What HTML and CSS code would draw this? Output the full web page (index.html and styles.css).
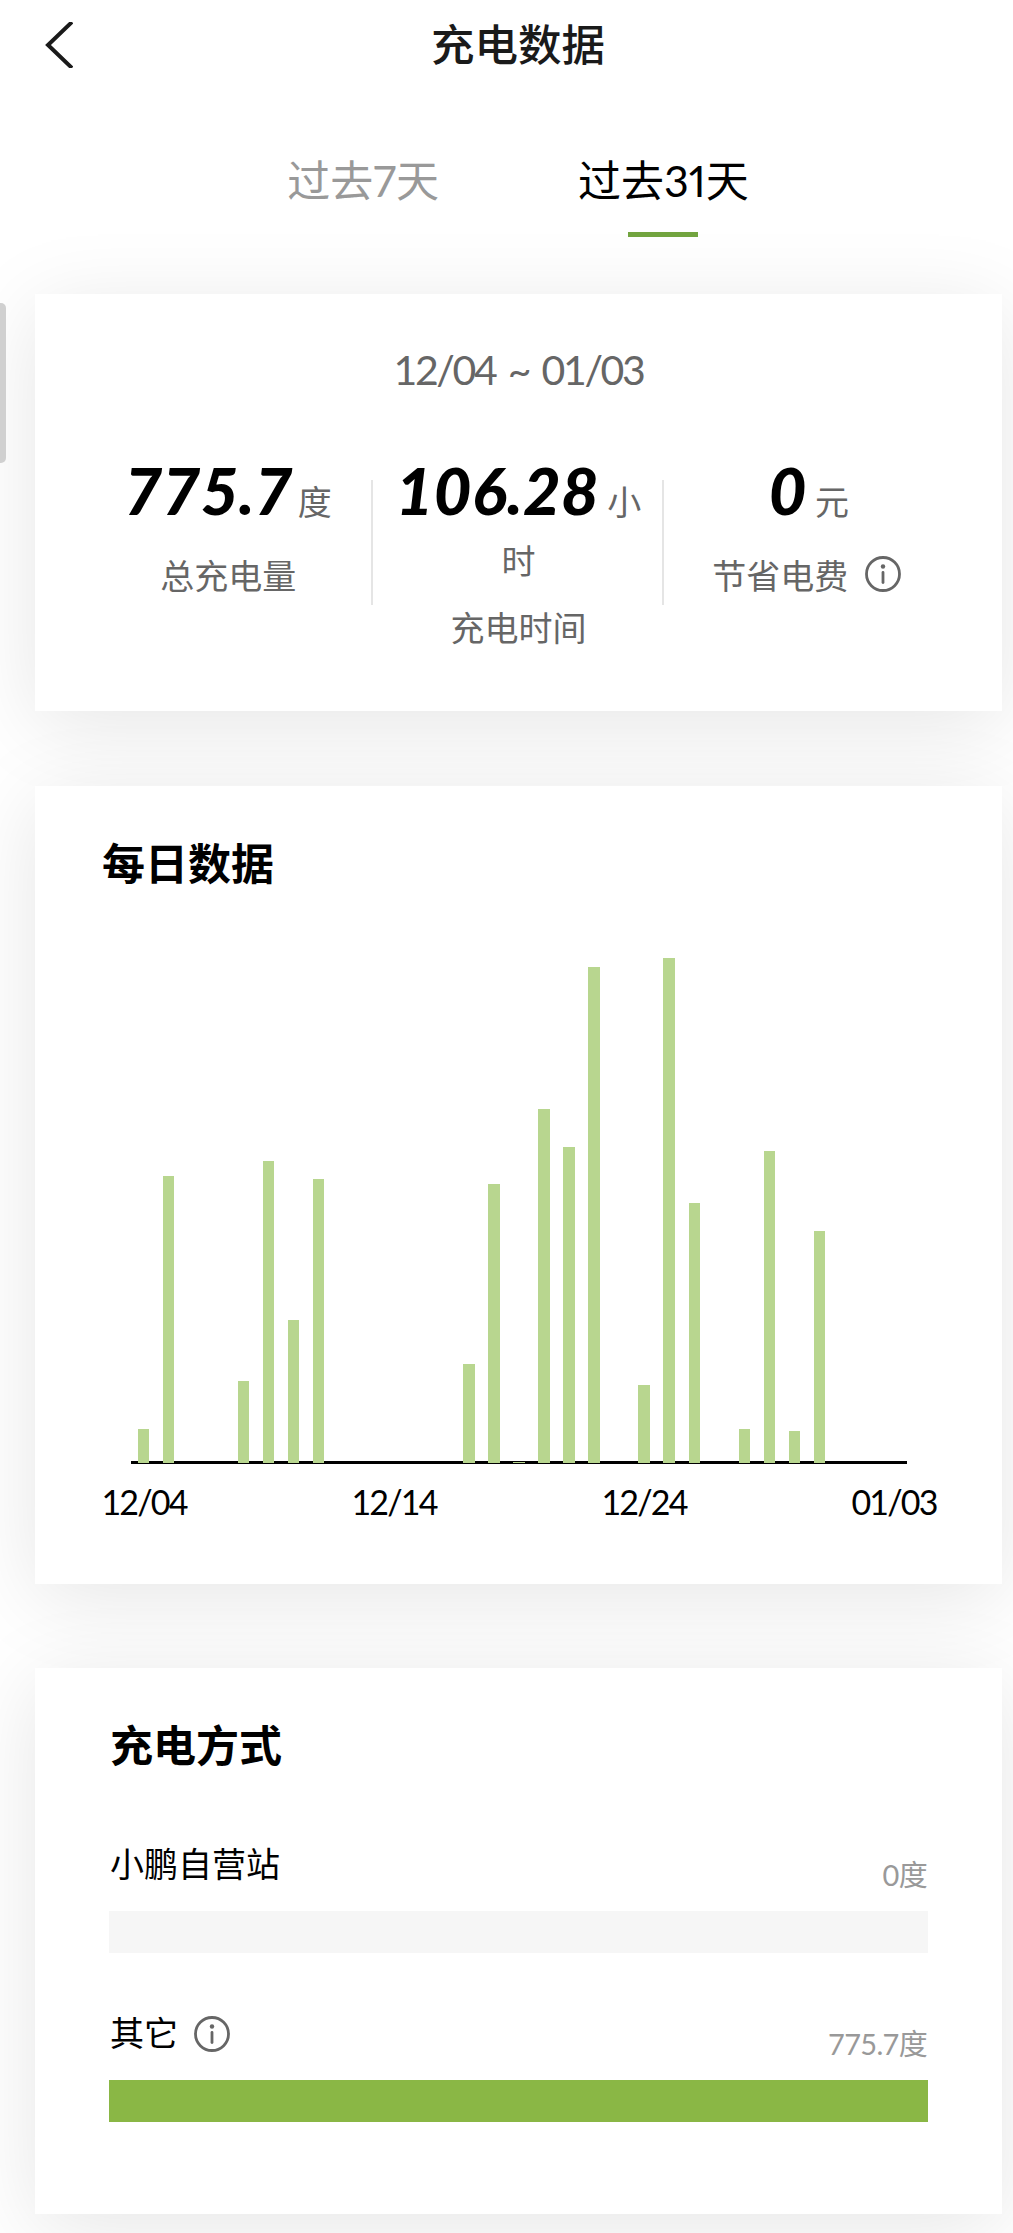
FILE: index.html
```html
<!DOCTYPE html>
<html lang="zh-CN">
<head>
  <meta charset="UTF-8">
  <title>充电数据</title>
  <link rel="stylesheet" href="styles.css">
</head>
<body>
  <div class="scroll-thumb"></div>
  <header class="header">
    <svg class="back" viewBox="0 0 30 46"><path d="M29 0 L5 23 L29 46"/></svg>
    <h1>充电数据</h1>
  </header>

  <nav class="tabs">
    <div class="tab">过去7天</div>
    <div class="tab active">过去31天</div>
  </nav>

  <section class="card summary">
    <div class="range">12/04 ~ 01/03</div>
    <div class="stats">
      <div class="stat">
        <div class="value"><b>775.7</b><span class="unit">度</span></div>
        <div class="label">总充电量</div>
      </div>
      <div class="stat">
        <div class="value"><b>106.28</b><span class="unit wide">小</span><span>时</span></div>
        <div class="label">充电时间</div>
      </div>
      <div class="stat">
        <div class="value"><b>0</b><span class="unit wide">元</span></div>
        <div class="label">节省电费
          <svg class="info" viewBox="0 0 36 36"><circle cx="18" cy="18" r="16.5"/><path d="M18 16.5V26.5"/><circle class="dot" cx="18" cy="10.5" r="2.2"/></svg>
        </div>
      </div>
    </div>
  </section>

  <section class="card daily">
    <h2>每日数据</h2>
    <div class="chart" id="chart"></div>
    <div class="axis">
      <span>12/04</span>
      <span>12/14</span>
      <span>12/24</span>
      <span>01/03</span>
    </div>
  </section>

  <section class="card methods">
    <h2>充电方式</h2>
    <div class="method">
      <div class="method-head">
        <div class="name">小鹏自营站</div>
        <div class="amount">0度</div>
      </div>
      <div class="track"><div class="fill" style="width:0%"></div></div>
    </div>
    <div class="method">
      <div class="method-head">
        <div class="name">其它
          <svg class="info" viewBox="0 0 36 36"><circle cx="18" cy="18" r="16.5"/><path d="M18 16.5V26.5"/><circle class="dot" cx="18" cy="10.5" r="2.2"/></svg>
        </div>
        <div class="amount">775.7度</div>
      </div>
      <div class="track"><div class="fill" style="width:100%"></div></div>
    </div>
  </section>

  <script>
    // 12/04 - 01/03
    const days = [34, 287, 0, 0, 82, 302, 143, 284, 0, 0, 0, 0, 0, 99, 279, 1.5,
      354, 316, 496, 0, 78, 505, 260.5, 0, 34, 312, 32, 232, 0, 0, 0];
    const chart = document.getElementById('chart');
    days.forEach(function(h) {
      const bar = document.createElement('div');
      bar.className = 'bar';
      bar.style.height = h + 'px';
      chart.appendChild(bar);
    });
  </script>
</body>
</html>
```
FILE: styles.css
```css
* { box-sizing: border-box; }
body {
  margin: 0;
  height: 2233px;
  overflow: hidden;
  background: #fff;
  color: #000;
  font-family: Lato, "Noto Sans CJK SC", sans-serif;
}
h1, h2 { margin: 0; }
.scroll-thumb {
  position: absolute;
  left: 0;
  top: 303px;
  width: 6px;
  height: 160px;
  background: #d0d0d0;
  border-radius: 0 5px 5px 0;
}
.header {
  display: grid;
  grid-template-columns: 100px 1fr 100px;
  align-items: center;
  height: 90px;
  padding: 0 0 0 23px;
}
.back { width: 30px; height: 46px; margin-left: 20px; }
.back path { fill: none; stroke: #1a1a1a; stroke-width: 4; }
.header h1 {
  margin-bottom: 2px;
  text-align: center;
  font-size: 43.5px;
  line-height: 60px;
  font-weight: 500;
  color: #1a1a1a;
}
.tabs {
  display: flex;
  justify-content: center;
  gap: 139px;
  height: 204px;
  padding: 61px 0 0 23px;
}
.tab {
  display: flex;
  flex-direction: column;
  align-items: center;
  font-size: 43px;
  line-height: 60px;
  font-variant-numeric: proportional-nums;
  color: #999;
}
.tab.active { color: #000; }
.tab.active::after {
  content: "";
  width: 70px;
  height: 5px;
  margin-top: 21px;
  background: #72a43f;
}
.card {
  width: 967px;
  margin-left: 35px;
  background: #fff;
  box-shadow: 0 14px 80px rgba(0, 0, 0, 0.1);
}
.summary { height: 417px; padding: 46px 48px 0; }
.range {
  text-align: center;
  font-size: 41px;
  line-height: 60px;
  letter-spacing: -2.3px;
  word-spacing: 4px;
  color: #666;
}
.stats { display: flex; margin-top: 45px; }
.stat {
  position: relative;
  flex: 1;
  padding: 0 20px;
  text-align: center;
}
.stat + .stat::before {
  content: "";
  position: absolute;
  left: -2px;
  top: 35px;
  width: 2px;
  height: 125px;
  background: #e5e5e5;
}
.value { line-height: 52px; font-size: 34px; color: #666; }
.value b {
  font-size: 65px;
  line-height: 90px;
  font-weight: 900;
  font-style: italic;
  letter-spacing: 0.4px;
  color: #000;
}
.unit { margin-left: 5px; }
.unit.wide { margin-left: 8px; }
.label {
  display: flex;
  justify-content: center;
  align-items: center;
  height: 50px;
  margin-top: 14px;
  font-size: 34px;
  color: #666;
}
.info { width: 36px; height: 36px; margin-left: 17px; fill: none; stroke: #666; stroke-width: 2.8; stroke-linecap: round; }
.label .info { margin-right: 4px; }
.info .dot { fill: #666; stroke: none; }
h2 { font-size: 43px; line-height: 60px; font-weight: 700; }
.daily { height: 798px; margin-top: 75px; padding: 48px 67px 0; }
.chart {
  display: flex;
  justify-content: space-around;
  align-items: flex-end;
  width: 776px;
  height: 570px;
  margin-left: 29px;
  background: linear-gradient(#000, #000) bottom / 100% 3px no-repeat;
}
.bar { width: 11.4px; background: #b8d68f; margin-bottom: 1px; }
/* each label is centred under its own day */
.axis {
  display: grid;
  grid-template-columns: repeat(4, 250px);
  margin: 16px 0 0 -83px;
  font-size: 34px;
  line-height: 44px;
  letter-spacing: -1.8px;
  text-align: center;
}
.methods { height: 546px; margin-top: 84px; padding: 48px 74px 0; }
.methods h2 { padding-left: 1px; }
.method-head {
  display: flex;
  justify-content: space-between;
  height: 71px;
  padding: 0 1px;
}
.method { margin-top: 64px; }
.method + .method { margin-top: 56px; }
.name { display: flex; align-items: center; height: 44px; font-size: 34px; }
.name .info { margin-top: 6px; margin-left: 16px; }
.amount { margin-top: 18px; font-size: 29px; line-height: 34px; letter-spacing: -0.7px; color: #999; }
.track { height: 42px; background: #f6f6f6; }
.fill { height: 100%; background: #8ab745; }
```
